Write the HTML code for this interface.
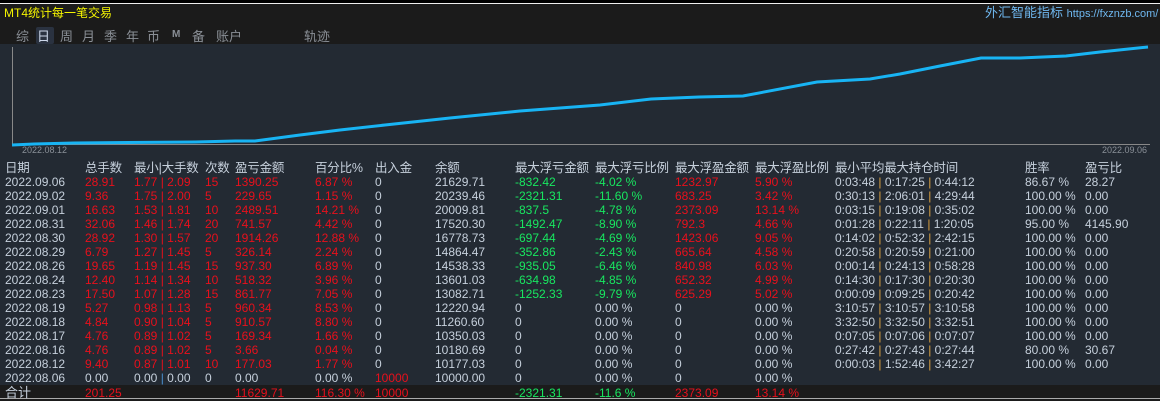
<!DOCTYPE html>
<html><head><meta charset="utf-8"><style>
*{margin:0;padding:0;box-sizing:border-box}
body{width:1160px;height:401px;overflow:hidden;background:#232a33;font-family:"Liberation Sans","Noto Sans CJK SC",sans-serif;font-size:12px;color:#c6d0dc;position:relative}
.top{position:absolute;left:0;top:0;width:1160px;height:44px;background:#1b1b1b;border-top:3px solid #000}
.top:before{content:"";position:absolute;left:0;top:0;width:1160px;height:1px;background:#eee}
.t{position:absolute;white-space:nowrap;line-height:14px}
.r{color:#e8101c}.g{color:#18e860}.y{color:#f5f500}
.tab{position:absolute;top:26px;font-size:13px;color:#8a8f96}
.tot{position:absolute;left:0;top:385px;width:1160px;height:13px;background:#1b1b1b}
.bl{position:absolute;left:0;top:398px;width:1160px;height:1px;background:#aaa}
.bb{position:absolute;left:0;top:399px;width:1160px;height:2px;background:#1b1b1b}
.sep{color:#d9a040}
.hd{font-size:12.5px;letter-spacing:-0.2px}
</style></head><body>
<div class="top"></div>
<div class="t y" style="left:4px;top:6px;font-size:12px">MT4统计每一笔交易</div>
<div class="t" style="left:985px;top:6px;font-size:13px;color:#6fb8f0">外汇智能指标 <span style="font-size:11px">https://fxznzb.com/</span></div>
<div style="position:absolute;left:36px;top:27px;width:18px;height:17px;background:#2a3240;border-radius:2px"></div>
<div class="tab" style="left:16px">综</div>
<div class="tab" style="left:37px;color:#cdd8ea">日</div>
<div class="tab" style="left:60px">周</div>
<div class="tab" style="left:82px">月</div>
<div class="tab" style="left:104px">季</div>
<div class="tab" style="left:126px">年</div>
<div class="tab" style="left:147px">币</div>
<div class="tab" style="left:172px;font-size:10px;top:29px;font-weight:bold">M</div>
<div class="tab" style="left:192px">备</div>
<div class="tab" style="left:216px">账户</div>
<div class="tab" style="left:304px">轨迹</div>
<svg style="position:absolute;left:0;top:44px" width="1160" height="110">
<line x1="12.5" y1="3" x2="12.5" y2="101" stroke="#888" />
<line x1="12" y1="100.5" x2="1150" y2="100.5" stroke="#888"/>
<polyline fill="none" stroke="#18b4f4" stroke-width="3" points="12,101 34,100 74,99 195,98 235,97 255,97 270,95 300,91 340,86 385,81 450,74 520,67 600,61 651,55 699,53 743,52 817,38 870,35 900,30 940,22 981,14 1020,14 1066,12 1100,8 1148,3"/>
<text x="22" y="109" fill="#8a9098" font-size="9" font-family="Liberation Sans">2022.08.12</text>
<text x="1102" y="109" fill="#8a9098" font-size="9" font-family="Liberation Sans">2022.09.06</text>
</svg>
<div class="tot"></div><div class="bl"></div><div class="bb"></div>
<div id="tb"></div>
<script>
var cols=[5,85,134,205,235,315,375,435,515,595,675,755,835,1025,1085];
var hd=["日期","总手数","最小|大手数","次数","盈亏金额","百分比%","出入金","余额","最大浮亏金额","最大浮亏比例","最大浮盈金额","最大浮盈比例","最小平均最大持仓时间","胜率","盈亏比"];
var D=[
["2022.09.06","28.91","1.77|2.09","15","1390.25","6.87 %","0","21629.71","-832.42","-4.02 %","1232.97","5.90 %","0:03:48|0:17:25|0:44:12","86.67 %","28.27"],
["2022.09.02","9.36","1.75|2.00","5","229.65","1.15 %","0","20239.46","-2321.31","-11.60 %","683.25","3.42 %","0:30:13|2:06:01|4:29:44","100.00 %","0.00"],
["2022.09.01","16.63","1.53|1.81","10","2489.51","14.21 %","0","20009.81","-837.5","-4.78 %","2373.09","13.14 %","0:03:15|0:19:08|0:35:02","100.00 %","0.00"],
["2022.08.31","32.06","1.46|1.74","20","741.57","4.42 %","0","17520.30","-1492.47","-8.90 %","792.3","4.66 %","0:01:28|0:22:11|1:20:05","95.00 %","4145.90"],
["2022.08.30","28.92","1.30|1.57","20","1914.26","12.88 %","0","16778.73","-697.44","-4.69 %","1423.06","9.05 %","0:14:02|0:52:32|2:42:15","100.00 %","0.00"],
["2022.08.29","6.79","1.27|1.45","5","326.14","2.24 %","0","14864.47","-352.86","-2.43 %","665.64","4.58 %","0:20:58|0:20:59|0:21:00","100.00 %","0.00"],
["2022.08.26","19.65","1.19|1.45","15","937.30","6.89 %","0","14538.33","-935.05","-6.46 %","840.98","6.03 %","0:00:14|0:24:13|0:58:28","100.00 %","0.00"],
["2022.08.24","12.40","1.14|1.34","10","518.32","3.96 %","0","13601.03","-634.98","-4.85 %","652.32","4.99 %","0:14:30|0:17:30|0:20:30","100.00 %","0.00"],
["2022.08.23","17.50","1.07|1.28","15","861.77","7.05 %","0","13082.71","-1252.33","-9.79 %","625.29","5.02 %","0:00:09|0:09:25|0:20:42","100.00 %","0.00"],
["2022.08.19","5.27","0.98|1.13","5","960.34","8.53 %","0","12220.94","0","0.00 %","0","0.00 %","3:10:57|3:10:57|3:10:58","100.00 %","0.00"],
["2022.08.18","4.84","0.90|1.04","5","910.57","8.80 %","0","11260.60","0","0.00 %","0","0.00 %","3:32:50|3:32:50|3:32:51","100.00 %","0.00"],
["2022.08.17","4.76","0.89|1.02","5","169.34","1.66 %","0","10350.03","0","0.00 %","0","0.00 %","0:07:05|0:07:06|0:07:07","100.00 %","0.00"],
["2022.08.16","4.76","0.89|1.02","5","3.66","0.04 %","0","10180.69","0","0.00 %","0","0.00 %","0:27:42|0:27:43|0:27:44","80.00 %","30.67"],
["2022.08.12","9.40","0.87|1.01","10","177.03","1.77 %","0","10177.03","0","0.00 %","0","0.00 %","0:00:03|1:52:46|3:42:27","100.00 %","0.00"],
["2022.08.06","0.00","0.00|0.00","0","0.00","0.00 %","10000","10000.00","0","0.00 %","0","0.00 %","","",""]];
var h="";
function cell(x,y,txt,c){
 if(txt.indexOf("|")>=0){
  if(x==835) txt=txt.split("|").join(' <span class="sep">|</span> ');
  else if(c=="") txt=txt.replace("|",' <span style="color:#4a90d0">|</span> ');
  else txt=txt.replace("|"," | ");
 }
 h+='<div class="t '+c+'" style="left:'+x+'px;top:'+y+'px">'+txt+'</div>';}
hd.forEach(function(t,i){h+='<div class="t hd" style="left:'+cols[i]+'px;top:161px">'+t+'</div>';});
D.forEach(function(r,j){var y=175+14*j;r.forEach(function(v,i){var c="";
if(i>=1&&i<=5)c=(r[0]=="2022.08.06")?"":"r";
if(i==6&&v!="0")c="r";
if((i==8||i==9)&&v.charAt(0)=="-")c="g";
if((i==10||i==11)&&v!="0"&&v!="0.00 %")c="r";
cell(cols[i],y,v,c);});});
var ty=386;
h+='<div class="t" style="left:5px;top:'+ty+'px;font-size:13px">合计</div>';
cell(85,ty,"201.25","r");cell(235,ty,"11629.71","r");cell(315,ty,"116.30 %","r");cell(375,ty,"10000","r");cell(515,ty,"-2321.31","g");cell(595,ty,"-11.6 %","g");cell(675,ty,"2373.09","r");cell(755,ty,"13.14 %","r");
document.getElementById("tb").innerHTML=h;
</script>
</body></html>
